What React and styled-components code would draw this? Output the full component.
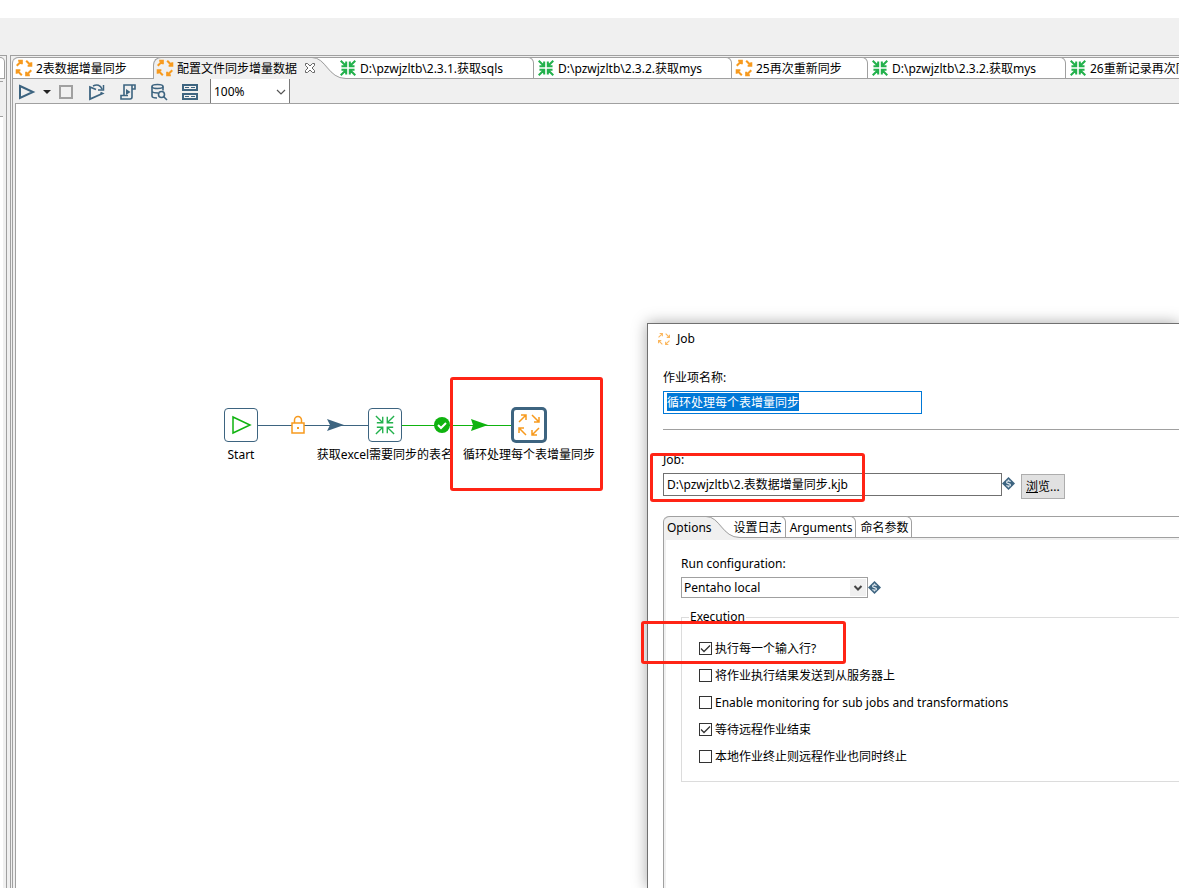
import React, { useEffect, useRef } from "react";
import styled, { createGlobalStyle, css } from "styled-components";

const colors = {
  chrome: "#f0f0f0",
  line: "#a0a0a0",
  steel: "#3d6480",
  orange: "#f79a1e",
  green: "#22b14c",
  hop: "#0fb30f",
  select: "#0078d7",
  mark: "#ff2415"
};

const GlobalStyle = createGlobalStyle`
  * {
    box-sizing: border-box;
  }
  body {
    margin: 0;
  }
  body, button, input, select {
    font-family: "Noto Sans", "Noto Sans CJK SC", sans-serif;
    font-size: 12px;
    line-height: 16px;
    color: #000;
  }
`;

const Page = styled.div`
  display: flex;
  flex-direction: column;
  min-height: 100vh;
  overflow: hidden;
  background: ${colors.chrome};
  border-top: 18px solid #fff;
`;

const Workspace = styled.main`
  display: flex;
  flex: 1;
  gap: 3px;
  padding-top: 37px;
`;

const SidePane = styled.aside`
  display: flex;
  flex-direction: column;
  width: 7px;
  padding: 1px 1px 0 0;
  border-top: 1px solid ${colors.line};
  border-right: 1px solid ${colors.line};
`;

const SideTab = styled.div`
  height: 22px;
  width: 5px;
  background: #fff;
  border: 1px solid ${colors.line};
  border-left: 0;
  border-top-right-radius: 5px;
`;

const SideBody = styled.div`
  flex: 1;
  width: 3px;
  margin-top: 2px;
  background: #fff;
  border-top: 1px solid ${colors.line};

  &::before {
    content: "";
    display: block;
    height: 34px;
    background: ${colors.chrome};
    border-bottom: 1px solid ${colors.line};
  }
`;

const Editor = styled.section`
  display: flex;
  flex: 1;
  min-width: 0;
  padding: 1px 0 0 1px;
  border-top: 1px solid ${colors.line};
  border-left: 1px solid ${colors.line};
`;

const EditorBody = styled.div`
  display: flex;
  flex: 1;
  flex-direction: column;
  min-width: 0;
  border-left: 1px solid ${colors.line};
  border-top-left-radius: 6px;
`;

const TabBar = styled.div`
  display: flex;
  height: 22px;
  border-top: 1px solid ${colors.line};
  border-top-left-radius: 6px;
  background: linear-gradient(${colors.line}, ${colors.line}) bottom / 100% 1px no-repeat #fff;
`;

const tabReset = css`
  display: flex;
  align-items: center;
  flex: none;
  margin: -1px 0 0;
  border: 0 solid ${colors.line};
  background: #fff;
  white-space: nowrap;
  text-align: left;
`;

const Tab = styled.button`
  ${tabReset}
  gap: 4px;
  width: ${props => props.$width}px;
  padding: 0 4px;
  border-width: 1px ${props => (props.$last ? 0 : 1)}px 1px 0;
  border-top-right-radius: 6px;
  ${props =>
    props.$first &&
    css`
      padding-left: 3px;
      border-right-width: 0;
      border-top-left-radius: 6px;
      border-top-right-radius: 0;
    `}
  ${props =>
    props.$active &&
    css`
      padding: 0 0 1px 3px;
      border-width: 1px 0 0 1px;
      border-radius: 8px 0 0 0;
      background: ${colors.chrome};
    `}
`;

const TabTitle = styled.span`
  padding-top: 2px;
`;

const Curve = styled.svg`
  position: relative;
  flex: none;
  width: 36px;
  height: 22px;
  margin: -1px -10px 0 -8px;
  pointer-events: none;
`;

const CloseIcon = styled.svg`
  flex: none;
  width: 12px;
  height: 12px;
  margin-left: 3px;
`;

const Toolbar = styled.div`
  display: flex;
  align-items: center;
  gap: 11px;
  height: 24px;
  padding-left: 5px;
`;

const ToolGroup = styled.div`
  display: flex;
  gap: 13px;
  padding-top: 2px;
`;

const RunGroup = styled.div`
  display: flex;
`;

const ToolButton = styled.button`
  display: flex;
  flex: none;
  align-items: center;
  justify-content: center;
  width: 18px;
  height: 20px;
  padding: 0;
  border: 0;
  background: none;
`;

const CaretButton = styled(ToolButton)`
  width: 21px;
`;

const SelectBox = styled.div`
  display: grid;
  align-items: center;
  width: ${props => props.$width}px;
  height: ${props => props.$height}px;

  & > * {
    grid-area: 1 / 1;
  }
  svg {
    justify-self: end;
    margin-right: 2px;
    pointer-events: none;
  }
`;

const Select = styled.select`
  width: 100%;
  height: 100%;
  padding: 0 2px;
  appearance: none;
  border: 1px solid ${colors.line};
  border-radius: 0;
  background: #fff;
`;

const ZoomSelect = styled(Select)`
  padding: 2px 3px 0;
  border-width: 0 1px;
  border-color: #7a7a7a;
`;

const Canvas = styled.div`
  position: relative;
  flex: 1;
  margin-left: 2px;
  border-top: 1px solid ${colors.line};
  border-left: 1px solid ${colors.line};
  background: #fff;
`;

const Hops = styled.svg`
  position: absolute;
  left: 0;
  top: 300px;
`;

const Node = styled.div`
  position: absolute;
  left: ${props => props.$x}px;
  top: ${props => props.$y}px;
  display: flex;
  flex-direction: column;
  align-items: center;
  gap: 5px;
  width: 144px;
  white-space: nowrap;
`;

const NodeBox = styled.div`
  display: flex;
  align-items: center;
  justify-content: center;
  width: 34px;
  height: 34px;
  border: ${props => (props.$selected ? 2 : 1)}px solid ${colors.steel};
  border-radius: 4px;
  box-shadow: ${props => (props.$selected ? `0 0 0 1px ${colors.steel}` : "none")};
  background: #fff;
`;

const Highlight = styled.div`
  position: absolute;
  left: ${props => props.$x}px;
  top: ${props => props.$y}px;
  width: ${props => props.$width}px;
  height: ${props => props.$height}px;
  border: 3px solid ${colors.mark};
  border-radius: 3px;
  pointer-events: none;
`;

const Dialog = styled.div`
  position: absolute;
  left: 631px;
  right: 0;
  top: 219px;
  bottom: 0;
  display: flex;
  flex-direction: column;
  border-top: 1px solid #707070;
  border-left: 1px solid #707070;
  box-shadow: 0 0 14px rgba(0, 0, 0, 0.35);
  background: #fff;
`;

const DialogTitle = styled.header`
  display: flex;
  align-items: center;
  gap: 7px;
  height: 30px;
  padding-left: 10px;
`;

const DialogBody = styled.form`
  display: flex;
  flex: 1;
  flex-direction: column;
  padding: 16px 0 0 15px;
`;

const Label = styled.label`
  display: block;
  margin-bottom: 5px;
`;

const TextInput = styled.input`
  width: ${props => props.$width}px;
  height: 23px;
  padding: 0 3px 1px;
  border: 1px solid #707070;
  outline: 0;

  &:focus {
    border-color: ${colors.select};
  }
  &::selection {
    background: ${colors.select};
    color: #fff;
  }
`;

const Divider = styled.hr`
  width: 100%;
  margin: 15px 0 22px;
  border: 0;
  border-top: 1px solid ${colors.line};
`;

const FieldRow = styled.div`
  display: flex;
  align-items: ${props => (props.$center ? "center" : "flex-start")};
`;

const VariableIcon = styled.svg`
  width: 13px;
  height: 13px;
  margin-top: ${props => (props.$top ? 4 : 0)}px;
`;

const BrowseButton = styled.button`
  height: 25px;
  margin: 1px 0 0 6px;
  padding: 0 4px;
  border: 1px solid #adadad;
  background: #e1e1e1;
`;

const Folder = styled.div`
  display: flex;
  flex: 1;
  flex-direction: column;
  margin-top: 17px;
  border-left: 1px solid ${colors.line};
  border-top-left-radius: 6px;
`;

const FormTab = styled.button`
  ${tabReset}
  padding: 0 3px 0 4px;
  border-width: 1px 1px 1px 0;
  border-top-right-radius: 6px;
  ${props =>
    props.$active &&
    css`
      padding: 0 0 1px 3px;
      border-width: 1px 0 0;
      border-radius: 6px 0 0 0;
      background: ${colors.chrome};
    `}
`;

const FolderPane = styled.div`
  flex: 1;
  padding: 16px 0 0 15px;
  border-top: 2px solid ${colors.chrome};
  border-left: 2px solid ${colors.chrome};
`;

const Fieldset = styled.fieldset`
  min-width: 0;
  margin: 11px 0 0;
  padding: 10px 17px 11px;
  border: 1px solid #dcdcdc;
  border-right: 0;
`;

const Legend = styled.legend`
  margin-left: -10px;
  padding: 0 1px;
`;

const CheckRow = styled.label`
  display: flex;
  align-items: center;
  gap: 3px;
  height: 27px;
`;

const CheckBox = styled.span`
  display: grid;
  width: 13px;
  height: 13px;

  & > * {
    grid-area: 1 / 1;
  }
  input {
    width: 13px;
    height: 13px;
    margin: 0;
    appearance: none;
    border: 1px solid #333;
    background: #fff;
  }
  svg {
    visibility: hidden;
    pointer-events: none;
  }
  input:checked + svg {
    visibility: visible;
  }
`;

const ArrowIcon = styled.svg`
  flex: none;
  overflow: visible;
`;

const JobIcon = ({ size = 16, stroke = 2.8, color = colors.orange }) => (
  <ArrowIcon width={size} height={size} viewBox="0 0 22 22" fill="none" stroke={color} strokeWidth={stroke}>
    <path d="M1 8l7-7M3 1h5v5M14 1l7 7M21 3v5h-5M8 21l-7-7M1 19v-5h5M21 14l-7 7M14 16v5h5" />
  </ArrowIcon>
);

const TransIcon = ({ size = 16, stroke = 2.8 }) => (
  <ArrowIcon width={size} height={size} viewBox="0 0 22 22" fill="none" stroke={colors.green} strokeWidth={stroke}>
    <path d="M1 1l7 7M2 8.500h6.500V2M21 1l-7 7M13.500 2v6.500H20M1 21l7-7M2 13.500h6.500V20M21 21l-7-7M13.500 20v-6.500H20" />
  </ArrowIcon>
);

const TabCurve = () => (
  <Curve viewBox="0 0 36 22">
    <path d="M8 1.500C18 5 21 21.500 36 21.500V22H8z" fill={colors.chrome} />
    <path d="M0 .5h2C16 .5 18 21.500 36 21.500" fill="none" stroke={colors.line} />
  </Curve>
);

const Variable = ({ top }) => (
  <VariableIcon $top={top} viewBox="0 0 13 13">
    <path d="M6.500 0L13 6.500 6.500 13 0 6.500z" fill={colors.steel} />
    <path
      d="M8.500 4.800C7.700 3.500 4.600 3.700 4.600 5.200c0 1.700 3.900 1 3.900 2.700 0 1.500-3.200 1.600-4 .4M6.500 2.500v1.500M6.500 9v1.500"
      fill="none"
      stroke="#dfe8ee"
      strokeWidth="1.200"
    />
  </VariableIcon>
);

const tabs = [
  { title: "D:\\pzwjzltb\\2.3.1.获取sqls", width: 198 },
  { title: "D:\\pzwjzltb\\2.3.2.获取mys", width: 198 },
  { title: "25再次重新同步", width: 136, job: true },
  { title: "D:\\pzwjzltb\\2.3.2.获取mys", width: 198 },
  { title: "26重新记录再次同步", width: 198, last: true }
];

const options = [
  { label: "执行每一个输入行?", checked: true },
  { label: "将作业执行结果发送到从服务器上" },
  { label: "Enable monitoring for sub jobs and transformations" },
  { label: "等待远程作业结束", checked: true },
  { label: "本地作业终止则远程作业也同时终止" }
];

const EditorTabs = () => (
  <TabBar>
    <Tab $first $width={140}>
      <JobIcon />
      <TabTitle>2表数据增量同步</TabTitle>
    </Tab>
    <Tab $active $width={165}>
      <JobIcon />
      <TabTitle>配置文件同步增量数据</TabTitle>
      <CloseIcon viewBox="0 0 12 12" fill="#fff" stroke="#666">
        <path d="M1.500 1.500h2L6 4l2.500-2.500h2v2L8 6l2.500 2.500v2h-2L6 8l-2.500 2.500h-2v-2L4 6 1.500 3.500z" />
      </CloseIcon>
    </Tab>
    <TabCurve />
    {tabs.map((tab, i) => (
      <Tab key={i} $width={tab.width} $last={tab.last}>
        {tab.job ? <JobIcon /> : <TransIcon />}
        <TabTitle>{tab.title}</TabTitle>
      </Tab>
    ))}
  </TabBar>
);

const EditorToolbar = () => (
  <Toolbar>
    <ToolGroup>
      <RunGroup>
        <ToolButton aria-label="Run">
          <svg width="18" height="16" fill="none" stroke={colors.steel} strokeWidth="2">
            <path d="M2 2l13 6-13 6z" />
          </svg>
        </ToolButton>
        <CaretButton aria-label="Run options">
          <svg width="8" height="4">
            <path d="M0 0h8L4 4z" fill="#222" />
          </svg>
        </CaretButton>
        <ToolButton aria-label="Stop">
          <svg width="14" height="14" fill="none" stroke={colors.line} strokeWidth="2">
            <path d="M1 1h12v12H1z" />
          </svg>
        </ToolButton>
      </RunGroup>
      <ToolButton aria-label="Replay">
        <svg width="18" height="18" fill="none" stroke={colors.steel} strokeWidth="1.800">
          <path d="M8 6.500L2 4v12l12.500-5.500-2-1" />
          <path d="M5 3c4-2 7.500-1 9 3M10 7h5.500V2" strokeWidth="1.500" />
        </svg>
      </ToolButton>
      <ToolButton aria-label="Check">
        <svg width="18" height="18" fill="none" stroke={colors.steel} strokeWidth="1.600">
          <path d="M5 12V2h11v4h-3M13 2v12c0 1-1 2-2 2H2v-3.500h7" />
          <path d="M7 6l4.500 3L7 12z" fill={colors.steel} stroke="none" />
        </svg>
      </ToolButton>
      <ToolButton aria-label="Explore database">
        <svg width="18" height="18" fill="none" stroke={colors.steel} strokeWidth="1.600">
          <ellipse cx="7.500" cy="3.500" rx="5.500" ry="2" />
          <path d="M2 3.500V13c0 1 2 2 5 2M13 3.500v4M2 8c0 1 2 2 6 2" />
          <circle cx="11.500" cy="11.500" r="3" />
          <path d="M13.500 13.500l3.500 3.500" />
        </svg>
      </ToolButton>
      <ToolButton aria-label="Show results">
        <svg width="18" height="18" fill="none" stroke={colors.steel} strokeWidth="2">
          <path d="M2 2h14v5H2zM2 11h14v5H2z" />
          <path d="M4 4.500h4M10 4.500h4M4 13.500h4M10 13.500h4" strokeWidth="1" />
        </svg>
      </ToolButton>
    </ToolGroup>
    <SelectBox $width={80} $height={24}>
      <ZoomSelect aria-label="Zoom" defaultValue="100%">
        <option>100%</option>
      </ZoomSelect>
      <svg width="14" height="10" fill="none" stroke="#555" strokeWidth="1.200">
        <path d="M3 4l4 4 4-4" />
      </svg>
    </SelectBox>
  </Toolbar>
);

const JobDialog = () => {
  const nameInput = useRef(null);

  useEffect(() => {
    nameInput.current.focus();
    nameInput.current.select();
  }, []);

  return (
    <Dialog role="dialog" aria-label="Job">
      <DialogTitle>
        <JobIcon size={12} stroke={2} color="#fbb65c" />
        Job
      </DialogTitle>
      <DialogBody>
        <Label htmlFor="entry-name">作业项名称:</Label>
        <TextInput id="entry-name" ref={nameInput} $width={259} defaultValue="循环处理每个表增量同步" />
        <Divider />
        <Label htmlFor="job-path">Job:</Label>
        <FieldRow>
          <TextInput id="job-path" $width={339} defaultValue="D:\pzwjzltb\2.表数据增量同步.kjb" />
          <Variable top />
          <BrowseButton type="button">
            <u>浏</u>览...
          </BrowseButton>
        </FieldRow>
        <Folder>
          <TabBar>
            <FormTab type="button" $active>
              <TabTitle>Options</TabTitle>
            </FormTab>
            <TabCurve />
            <FormTab type="button">
              <TabTitle>设置日志</TabTitle>
            </FormTab>
            <FormTab type="button">
              <TabTitle>Arguments</TabTitle>
            </FormTab>
            <FormTab type="button">
              <TabTitle>命名参数</TabTitle>
            </FormTab>
          </TabBar>
          <FolderPane>
            <Label htmlFor="run-config">Run configuration:</Label>
            <FieldRow $center>
              <SelectBox $width={187} $height={21}>
                <Select id="run-config" defaultValue="Pentaho local">
                  <option>Pentaho local</option>
                </Select>
                <svg width="16" height="17" fill="none" stroke="#444" strokeWidth="2">
                  <path d="M0 0h16v17H0z" fill={colors.chrome} stroke="none" />
                  <path d="M4.500 7L8 10.500 11.500 7" />
                </svg>
              </SelectBox>
              <Variable />
            </FieldRow>
            <Fieldset>
              <Legend>Execution</Legend>
              {options.map(option => (
                <CheckRow key={option.label}>
                  <CheckBox>
                    <input type="checkbox" defaultChecked={option.checked} />
                    <svg width="13" height="13" fill="none" stroke="#333" strokeWidth="1.300">
                      <path d="M2 6.500l3 3 6-6" />
                    </svg>
                  </CheckBox>
                  {option.label}
                </CheckRow>
              ))}
            </Fieldset>
          </FolderPane>
        </Folder>
      </DialogBody>
      <Highlight $x={2} $y={129} $width={215} $height={49} />
      <Highlight $x={-7} $y={297} $width={205} $height={43} />
    </Dialog>
  );
};

const App = () => (
  <Page>
    <GlobalStyle />
    <Workspace>
      <SidePane>
        <SideTab />
        <SideBody />
      </SidePane>
      <Editor>
        <EditorBody>
          <EditorTabs />
          <EditorToolbar />
          <Canvas>
            <Hops width="600" height="40" fill="none">
              <path d="M242 21.500h110" stroke={colors.steel} />
              <path d="M386 21.500h110" stroke={colors.hop} />
              <path d="M311 15l17 6-17 6 3-6z" fill={colors.steel} />
              <path d="M455 15l17 6-17 6 2-6z" fill={colors.hop} />
              <path d="M276 19h12v10h-12z" fill="#fff" stroke={colors.orange} strokeWidth="1.500" />
              <path d="M278.500 19v-3a3.500 3.500 0 0 1 7 0v3" stroke={colors.orange} strokeWidth="1.500" />
              <path d="M281 23h2v2h-2z" fill={colors.orange} />
              <circle cx="426" cy="21" r="8" fill={colors.hop} />
              <path d="M422 21l3 3 5-5" stroke="#fff" strokeWidth="2" />
            </Hops>
            <Node $x={153} $y={304}>
              <NodeBox>
                <svg width="22" height="22" fill="none" stroke={colors.hop} strokeWidth="1.500">
                  <path d="M3 3l17 8-17 8z" />
                </svg>
              </NodeBox>
              Start
            </Node>
            <Node $x={297} $y={304}>
              <NodeBox>
                <TransIcon size={20} stroke={1.5} />
              </NodeBox>
              获取excel需要同步的表名
            </Node>
            <Node $x={441} $y={304}>
              <NodeBox $selected>
                <JobIcon size={22} stroke={1.5} />
              </NodeBox>
              循环处理每个表增量同步
            </Node>
            <Highlight $x={434} $y={273} $width={153} $height={114} />
            <JobDialog />
          </Canvas>
        </EditorBody>
      </Editor>
    </Workspace>
  </Page>
);

export default App;
